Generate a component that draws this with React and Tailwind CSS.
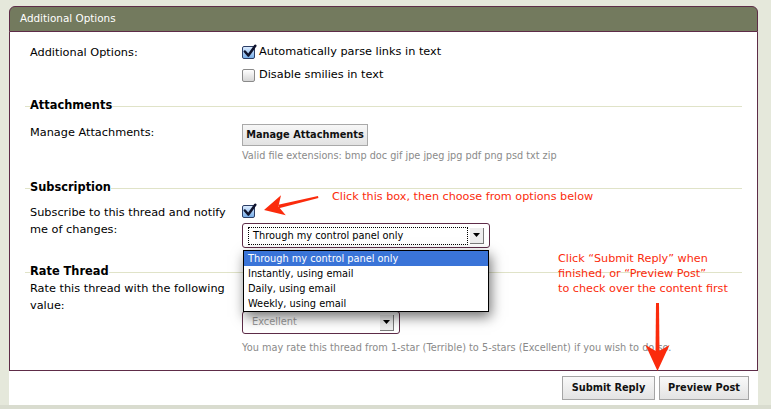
import React from "react";

function Check({ checked }) {
  if (checked) {
    return (
      <span className="relative block h-[13px] w-[13px] shrink-0 rounded-[2px] border border-[#2c3e66] bg-gradient-to-b from-[#dcecff] to-[#78aee8]">
        <svg viewBox="0 0 13 13" className="absolute left-[-1px] top-[-3px] h-[15px] w-[15px]">
          <path d="M2.5 6.5 L5.5 10 L11.5 1.5" fill="none" stroke="#10142e" strokeWidth="2.2" strokeLinecap="round" strokeLinejoin="round" />
        </svg>
      </span>
    );
  }
  return (
    <span className="block h-[13px] w-[13px] shrink-0 rounded-[2px] border border-[#8a8a8a] bg-gradient-to-b from-[#ffffff] to-[#d6d6d6]" />
  );
}

function Legend({ children, h = "h-[18px]" }) {
  return (
    <div className={`mx-[15px] flex items-center ${h}`}>
      <span className="h-px w-[5px] bg-[#e0e3c8]" />
      <span className="text-[11.4px] font-bold text-black">{children}</span>
      <span className="h-px flex-1 bg-[#e0e3c8]" />
    </div>
  );
}

function Arrow() {
  return (
    <span className="flex h-[16px] w-[14px] items-center justify-center border-b border-r border-[#7a7a7a] bg-[#eeeeee]">
      <svg viewBox="0 0 7 4" className="h-[4px] w-[7px]">
        <path d="M0 0 H7 L3.5 4 Z" fill="#000" />
      </svg>
    </span>
  );
}

export default function App() {
  return (
    <div className="relative h-[409px] w-[771px] overflow-hidden bg-[#e5e8db] pt-[6px] font-['DejaVu_Sans',Verdana,sans-serif] text-[11.3px] text-black">
      <div className="ml-[9px] w-[749px]">
        {/* header */}
        <div className="flex h-[26px] items-center rounded-t-[6px] border border-[#5e2c48] bg-[#737a5e] pl-[10px] text-[10.4px] text-white">
          Additional Options
        </div>
        {/* body */}
        <div className="h-[339px] border-x border-b border-[#5e2c48] bg-white pt-[9px]">
          <div className="flex">
            <div className="ml-[20px] w-[212px] leading-[23px]">Additional Options:</div>
            <div className="flex flex-col">
              <div className="flex h-[23px] items-center gap-[4px]">
                <Check checked />
                <span>Automatically parse links in text</span>
              </div>
              <div className="flex h-[23px] items-center gap-[4px]">
                <Check />
                <span>Disable smilies in text</span>
              </div>
            </div>
          </div>

          <div className="mt-[10px]">
            <Legend>Attachments</Legend>
          </div>
          <div className="mt-[9px] flex">
            <div className="ml-[20px] w-[212px] pt-[1px] leading-[16px]">Manage Attachments:</div>
            <div className="flex flex-col">
              <button className="h-[22px] w-[126px] whitespace-nowrap border border-[#a9a9a9] bg-gradient-to-b from-[#f7f7f7] to-[#e2e2e2] text-[9.8px] font-bold text-[#111]">
                Manage Attachments
              </button>
              <div className="mt-[3px] whitespace-nowrap text-[9.7px] leading-[14px] text-[#8a8a8a]">
                Valid file extensions: bmp doc gif jpe jpeg jpg pdf png psd txt zip
              </div>
            </div>
          </div>

          <div className="mt-[16px]">
            <Legend>Subscription</Legend>
          </div>
          <div className="mt-[7px] flex">
            <div className="ml-[20px] w-[212px] whitespace-nowrap leading-[17px]">
              Subscribe to this thread and notify
              <br />
              me of changes:
            </div>
            <div className="flex flex-col">
              <div className="mt-[1px] flex">
                <Check checked />
              </div>
              <div className="relative mt-[5px]">
                <div className="flex h-[25px] w-[248px] items-center gap-[2px] rounded-[3px] border border-[#5e2c48] bg-white px-[5px] text-[9.8px]">
                  <div className="flex h-[18px] flex-1 items-center border border-dotted border-black pl-[4px] leading-none">
                    Through my control panel only
                  </div>
                  <Arrow />
                </div>
                <div className="absolute left-[1px] top-[27px] z-10 w-[246px] border border-black bg-white text-[9.8px] leading-[15px] shadow-[2px_5px_12px_rgba(0,0,0,0.55)]">
                  <div className="bg-[#3a74d8] pl-[4px] text-white">Through my control panel only</div>
                  <div className="pl-[4px]">Instantly, using email</div>
                  <div className="pl-[4px]">Daily, using email</div>
                  <div className="pl-[4px]">Weekly, using email</div>
                </div>
              </div>
            </div>
          </div>

          <div className="mt-[16px]">
            <Legend h="h-[16px]">Rate Thread</Legend>
          </div>
          <div className="flex">
            <div className="ml-[20px] w-[212px] whitespace-nowrap leading-[17px]">
              Rate this thread with the following
              <br />
              value:
            </div>
            <div className="flex flex-col">
              <div className="mt-[31px] flex h-[23px] w-[158px] items-center rounded-[3px] border border-[#5e2c48] bg-white pl-[9px] pr-[5px] text-[9.8px] text-[#9a9a9a]">
                <span className="flex-1">Excellent</span>
                <Arrow />
              </div>
              <div className="mt-[7px] whitespace-nowrap text-[9.75px] leading-[14px] text-[#8a8a8a]">
                You may rate this thread from 1-star (Terrible) to 5-stars (Excellent) if you wish to do so.
              </div>
            </div>
          </div>
        </div>
        {/* footer */}
        <div className="flex h-[34px] justify-end gap-[4px] bg-white pr-[9px] pt-[5px]">
          <button className="h-[24px] w-[93px] whitespace-nowrap border border-[#a5a5a5] bg-gradient-to-b from-[#f9f9f9] to-[#e3e3e3] text-[9.8px] font-bold text-[#111]">
            Submit Reply
          </button>
          <button className="h-[24px] w-[90px] whitespace-nowrap border border-[#a5a5a5] bg-gradient-to-b from-[#f9f9f9] to-[#e3e3e3] text-[9.8px] font-bold text-[#111]">
            Preview Post
          </button>
        </div>
      </div>
      <div className="h-[4px] w-full bg-[#d9dccf]" />

      {/* annotations */}
      <div className="pointer-events-none absolute left-[332px] top-[189px] whitespace-nowrap text-[11.2px] leading-[15px] text-[#fb2b0c]">
        Click this box, then choose from options below
      </div>
      <div className="pointer-events-none absolute left-[558px] top-[251px] whitespace-nowrap text-[11.2px] leading-[15px] text-[#fb2b0c]">
        Click “Submit Reply” when
        <br />
        finished, or “Preview Post”
        <br />
        to check over the content first
      </div>
      <svg className="pointer-events-none absolute left-0 top-0" width="771" height="409" viewBox="0 0 771 409">
        <polygon points="318,196 318.4,198 279,208.3 278.2,204.7" fill="#fb2b0c" />
        <polygon points="264,210 281,195.3 278.4,206.4 285.8,215.2" fill="#fb2b0c" />
        <polygon points="656,303 659,303 659.5,352 655.5,352" fill="#fb2b0c" />
        <polygon points="657.5,371 645.5,345 657.5,352 669.5,345" fill="#fb2b0c" />
      </svg>
    </div>
  );
}
